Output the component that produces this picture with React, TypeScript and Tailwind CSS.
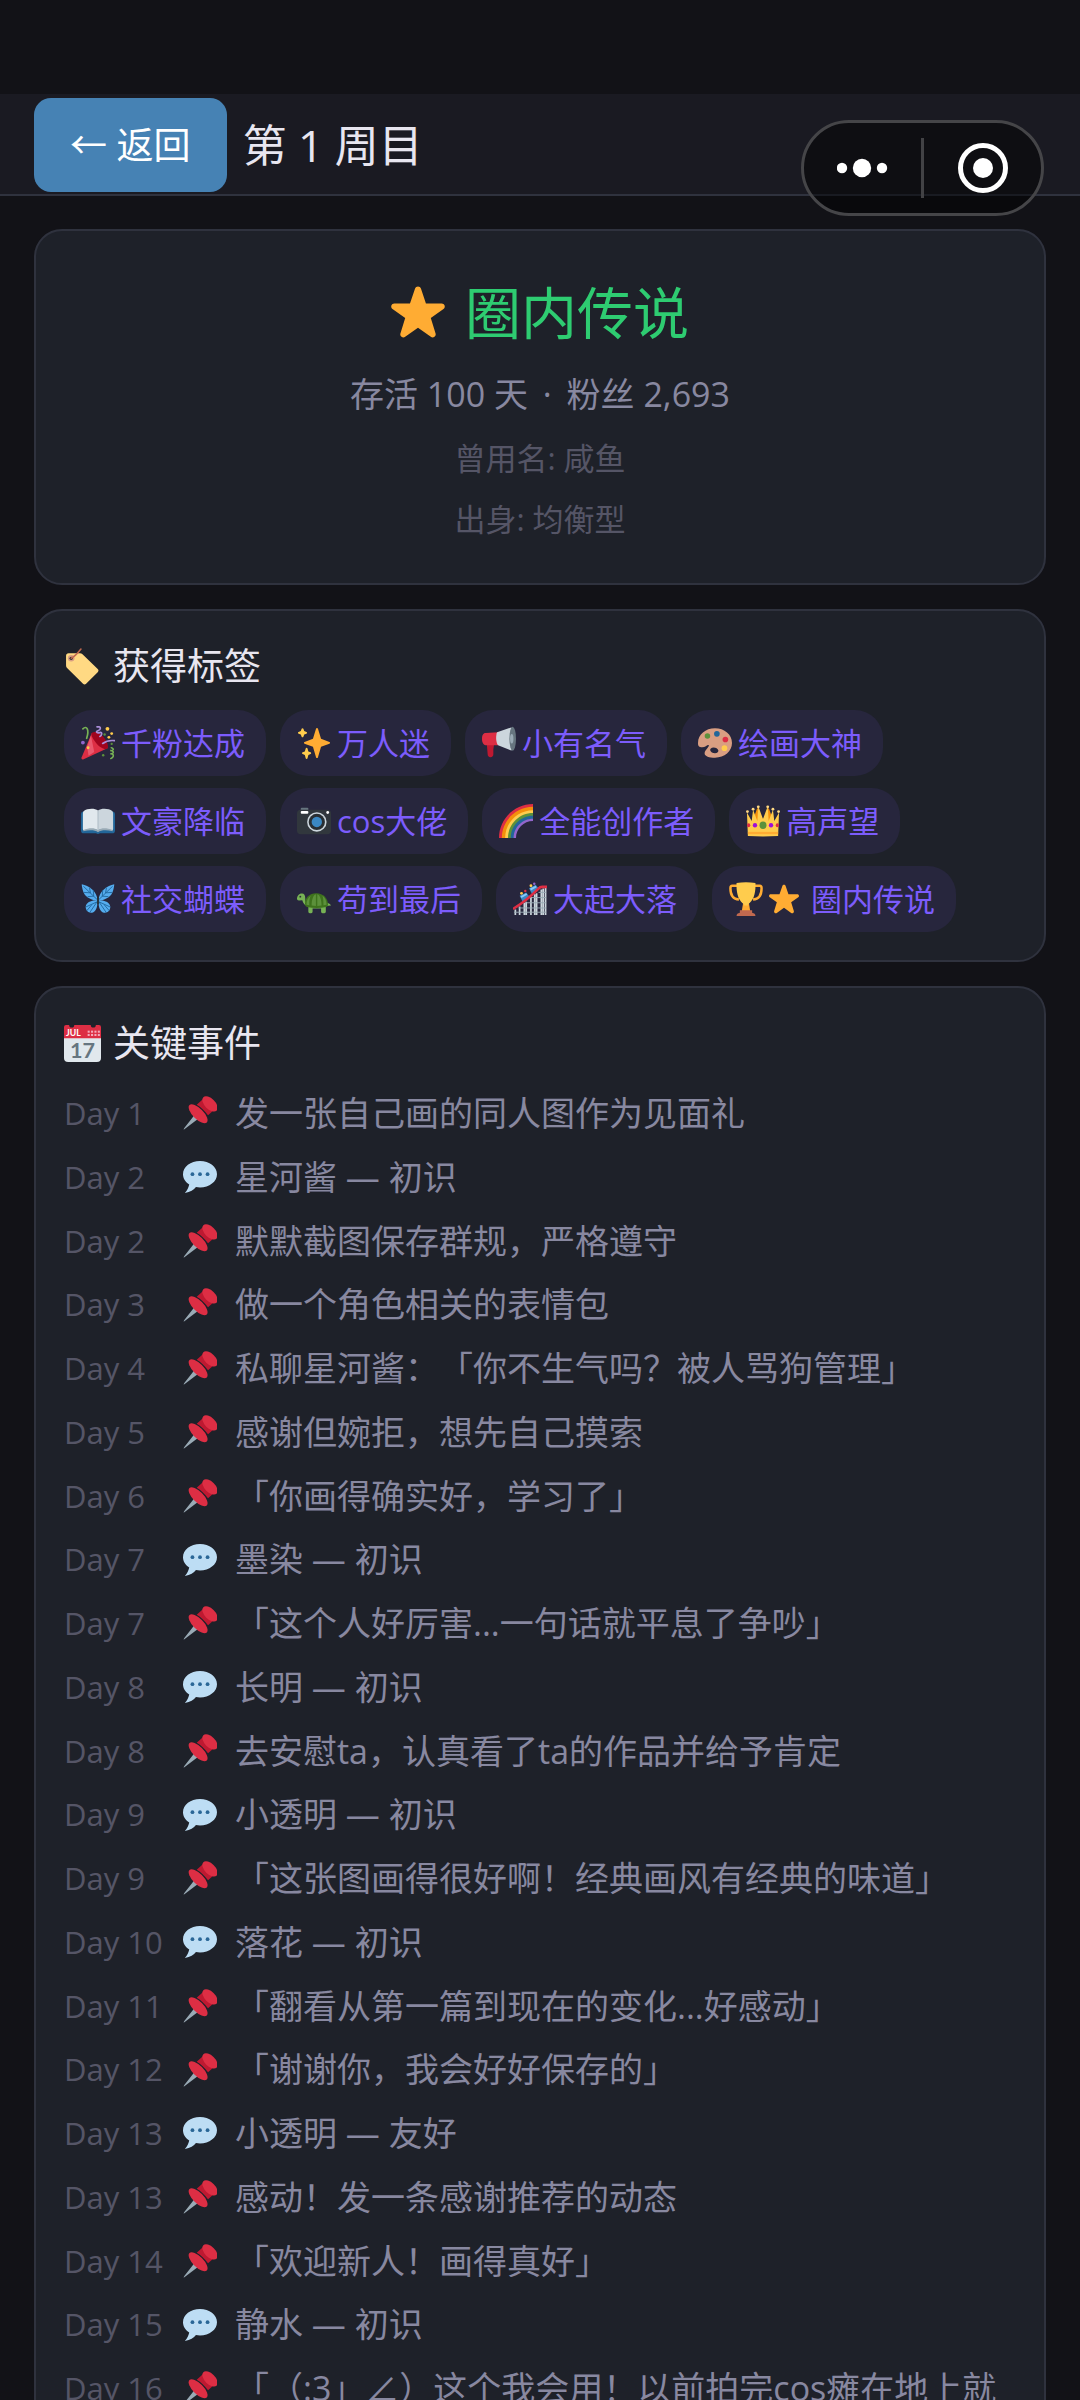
import React from "react";

interface IconProps {
  className?: string;
}

interface Tag {
  icons: React.FC<IconProps>[];
  text: string;
}

interface GameEvent {
  day: number;
  kind: "pin" | "chat";
  text: string;
}

const StarIcon: React.FC<IconProps> = ({ className }) => (
  <svg viewBox="1 2 34 33" className={className} aria-hidden="true">
    <path
      fill="#FFAC33"
      d="M27.287 34.627c-.404 0-.806-.124-1.152-.371L18 28.422l-8.135 5.834c-.343.247-.743.371-1.147.371-.409 0-.818-.124-1.165-.375-.684-.499-.971-1.379-.709-2.183l3.034-9.792-8.062-5.681c-.685-.495-.97-1.372-.711-2.176.262-.805 1.01-1.351 1.857-1.354l9.947-.016L16.14 3.632c.271-.8 1.02-1.338 1.86-1.338.845 0 1.594.538 1.859 1.338l3.176 9.418 9.994.016c.848.001 1.596.548 1.857 1.354.262.803-.023 1.681-.709 2.176l-8.063 5.681 3.035 9.792c.26.804-.027 1.684-.709 2.183-.348.251-.758.375-1.153.375z"
    />
  </svg>
);

const LabelIcon: React.FC<IconProps> = ({ className }) => (
  <svg viewBox="0 0 36 36" className={className} aria-hidden="true">
    <path
      fill="#FFD983"
      d="M2 7.500Q2 5 4.500 5H15.500Q17 5 18 6L32.800 20.500Q34.300 22 32.800 23.500L21.500 34.800Q20 36.200 18.500 34.800L3 19.500Q2 18.500 2 17Z"
    />
    <circle cx="7" cy="10" r="3.200" fill="#D99E82" />
    <circle cx="7" cy="10" r="1.600" fill="#292F33" />
    <path d="M7 10Q11 8 16.500 1" fill="none" stroke="#C1694F" strokeWidth="1.500" strokeLinecap="round" />
  </svg>
);

const CalendarIcon: React.FC<IconProps> = ({ className }) => (
  <svg viewBox="0 0 36 36" className={className} aria-hidden="true">
    <path fill="#E1E8ED" d="M0 11h36v21a4 4 0 0 1-4 4H4a4 4 0 0 1-4-4z" />
    <path
      fill="#DD2E44"
      d="M2 0h3a2.500 2.500 0 0 0 5 0h16a2.500 2.500 0 0 0 5 0h3a2 2 0 0 1 2 2v11H0V2a2 2 0 0 1 2-2z"
    />
    <g fill="#F4ABBA">
      <rect x="23" y="5.500" width="2" height="2" />
      <rect x="26.300" y="5.500" width="2" height="2" />
      <rect x="29.600" y="5.500" width="2" height="2" />
      <rect x="32.900" y="5.500" width="2" height="2" />
      <rect x="23" y="8.700" width="2" height="2" />
      <rect x="26.300" y="8.700" width="2" height="2" />
      <rect x="29.600" y="8.700" width="2" height="2" />
      <rect x="32.900" y="8.700" width="2" height="2" />
    </g>
    <text x="2" y="10.600" fontSize="8.500" fontWeight="700" fill="#fff" fontFamily="Lato, sans-serif">
      JUL
    </text>
    <text
      x="18"
      y="32"
      fontSize="21"
      fontWeight="700"
      textAnchor="middle"
      fill="#66757F"
      fontFamily="Lato, sans-serif"
    >
      17
    </text>
  </svg>
);

const PinIcon: React.FC<IconProps> = ({ className }) => (
  <svg viewBox="0 0 36 36" className={className} aria-hidden="true">
    <path fill="#99AAB5" d="M12 20.500l3.800 3.800L2.500 34.400Q1 35.600.700 35.300T1.600 33.500z" />
    <ellipse cx="16" cy="18.800" rx="13" ry="5.600" transform="rotate(45 16 18.800)" fill="#DD2E44" />
    <path fill="#BE1931" d="M21 3.500L32.500 15 26.500 20.500Q24 17 20.500 13.800 17.500 11 14.500 9.300z" />
    <ellipse cx="28.600" cy="8.400" rx="10" ry="5.600" transform="rotate(45 28.600 8.400)" fill="#DD2E44" />
  </svg>
);

const ChatIcon: React.FC<IconProps> = ({ className }) => (
  <svg viewBox="0 0 36 36" className={className} aria-hidden="true">
    <path
      fill="#BDDDF4"
      d="M18 1C8.059 1 0 7.268 0 15c0 4.368 2.574 8.268 6.604 10.835C6.080 28.144 4.859 31.569 2 35c5.758-.96 9.439-3.761 11.716-6.416C15.094 28.858 16.526 29 18 29c9.941 0 18-6.268 18-14S27.941 1 18 1z"
    />
    <circle cx="10" cy="15" r="2" fill="#2A6797" />
    <circle cx="18" cy="15" r="2" fill="#2A6797" />
    <circle cx="26" cy="15" r="2" fill="#2A6797" />
  </svg>
);

const PartyIcon: React.FC<IconProps> = ({ className }) => (
  <svg viewBox="0 0 36 36" className={className} aria-hidden="true">
    <path fill="#DD2E44" d="M11.500 7.500C15 6 29 18 28 23.500L2.800 35.300C1 36 0 35 .700 33.200z" />
    <path fill="#EA596E" d="M10.500 10L14 27.500 8 31.500 6.500 22z" />
    <path fill="#A0041E" d="M12 7c3-2 9 1 12.500 5.500s5.500 10 3 11.500-8-1.500-11.500-6S9.500 9 12 7z" />
    <circle cx="7.500" cy="23" r="1.500" fill="#FFCC4D" />
    <circle cx="2" cy="17.500" r="2" fill="#9266CC" />
    <path d="M2 3C6-1 9 4 6 13" fill="none" stroke="#77B255" strokeWidth="1.800" strokeLinecap="round" />
    <path
      d="M17 1c5-1 4 3 1 4s-1 3 2 2 2 3 0 4"
      fill="none"
      stroke="#AA8DD8"
      strokeWidth="1.800"
      strokeLinecap="round"
    />
    <path d="M23 18.500c4-3 8-3.500 12.500-3" fill="none" stroke="#AA8DD8" strokeWidth="1.800" strokeLinecap="round" />
    <path
      d="M32 23c4 1 2 3.500-1 3 4 0 4.500 3.500 0 3.500 4 0 4.500 3 .5 5"
      fill="none"
      stroke="#77B255"
      strokeWidth="1.600"
      strokeLinecap="round"
    />
    <circle cx="28" cy="3" r="2" fill="#FFCC4D" />
    <circle cx="32.500" cy="8" r="1.500" fill="#FFCC4D" />
    <circle cx="29.500" cy="12" r="1.500" fill="#FFCC4D" />
    <circle cx="25" cy="9" r="1.300" fill="#5C913B" />
    <circle cx="23.500" cy="31" r="1.300" fill="#5C913B" />
    <circle cx="32.500" cy="19" r="1.200" fill="#5C913B" />
  </svg>
);

const SparklesIcon: React.FC<IconProps> = ({ className }) => (
  <svg viewBox="0 0 36 36" className={className} aria-hidden="true">
    <path
      fill="#FFAC33"
      d="M34.347 16.893l-8.899-3.294-3.323-10.891c-.128-.42-.517-.708-.956-.708-.439 0-.828.288-.956.708l-3.322 10.891-8.9 3.294c-.393.146-.653.519-.653.938 0 .418.26.793.653.938l8.895 3.293 3.324 11.223c.126.424.516.715.959.715.442 0 .833-.291.959-.716l3.324-11.223 8.896-3.293c.391-.144.652-.518.652-.937 0-.418-.261-.792-.653-.938z"
    />
    <path
      fill="#FFCC4D"
      d="M14.347 27.894l-2.314-.856-.9-3.300c-.118-.436-.513-.738-.964-.738-.451 0-.846.302-.965.737l-.9 3.300-2.313.856c-.393.146-.653.520-.653.938 0 .418.260.793.653.938l2.301.853.907 3.622c.112.444.511.756.970.756.459 0 .858-.312.970-.757l.907-3.622 2.301-.853c.393-.144.653-.519.653-.937 0-.418-.260-.793-.653-.937zM10.009 6.231l-2.364-.875-.876-2.365c-.145-.393-.519-.653-.938-.653-.418 0-.792.260-.938.653l-.875 2.365-2.365.875c-.393.146-.653.520-.653.938 0 .418.260.793.653.938l2.365.875.875 2.365c.146.393.520.653.938.653.418 0 .792-.260.938-.653l.875-2.365 2.365-.875c.393-.146.653-.520.653-.938 0-.418-.260-.792-.653-.938z"
    />
  </svg>
);

const MegaphoneIcon: React.FC<IconProps> = ({ className }) => (
  <svg viewBox="0 0 36 36" className={className} aria-hidden="true">
    <path fill="#BE1931" d="M5 18h8l-1 7v5q0 3-3 3t-3-3z" />
    <path fill="#DD2E44" d="M4 7.500L17 6.500v14H5c-3 0-5-2.500-5-6.500s1-6.500 4-6.500z" />
    <path fill="#CCD6DD" d="M16 6.500L31 1.500c3 2 4 22 0 24.500L17 20.500c-2.500-3-2.500-11-1-14z" />
    <ellipse cx="32.500" cy="13.500" rx="3.500" ry="12.800" fill="#66757F" />
    <ellipse cx="31.500" cy="13.500" rx="1.800" ry="5" fill="#99AAB5" />
  </svg>
);

const PaletteIcon: React.FC<IconProps> = ({ className }) => (
  <svg viewBox="0 0 36 36" className={className} aria-hidden="true">
    <path
      fill="#D99E82"
      fillRule="evenodd"
      d="M18 2.500c10 0 18 6.500 18 15.500S28 33.500 18 33.500c-6 0-11-1.500-11-4.500 0-3.500 4.500-6 4.500-8.500-.8-1.700-3.500 2-7 2S0 21.500 0 18C0 9 8 2.500 18 2.500zm-1.500 20.300c-2.500 0-4 1.500-3.500 3.200s2.500 2.900 5 2.900 4-1.600 3.500-3.200-2.500-2.900-5-2.900z"
    />
    <circle cx="10" cy="10.500" r="2.900" fill="#5C913B" />
    <circle cx="20" cy="8.300" r="3" fill="#269" />
    <circle cx="29" cy="14.300" r="3" fill="#DD2E44" />
    <circle cx="28" cy="23.500" r="3" fill="#FFCC4D" />
  </svg>
);

const BookIcon: React.FC<IconProps> = ({ className }) => (
  <svg viewBox="0 0 36 36" className={className} aria-hidden="true">
    <path fill="#269" d="M3 8h30q3 0 3 3v17q0 3-3 3H20q-2 1.500-4 0H3q-3 0-3-3V11q0-3 3-3z" />
    <path fill="#E1E8ED" d="M18 7C14 4 6 5 3 7.500q-1 1-1 2.500v16.500q0 1.500 1.500 1.300C9 26 14 26 18 28z" />
    <path fill="#CCD6DD" d="M18 7c4-3 12-2 15 .5q1 1 1 2.500v16.500q0 1.500-1.500 1.300C27 26 22 26 18 28z" />
    <path fill="#99AAB5" d="M2.500 27.500C9 25 14 25 18 27.500c4-2.500 9-2.500 15.500 0v1.300c-6-1.300-12-1.500-15.500 1-3.500-2.500-9.500-2.300-15.500-1z" />
    <path stroke="#AAB8C2" strokeWidth="1" d="M18 7v21" />
  </svg>
);

const CameraIcon: React.FC<IconProps> = ({ className }) => (
  <svg viewBox="0 0 36 36" className={className} aria-hidden="true">
    <rect x="4" y="4" width="8" height="4" rx="1" fill="#66757F" />
    <rect y="6" width="36" height="26" rx="4" fill="#31373D" />
    <rect x="4" y="7.500" width="8" height="2.800" rx="1" fill="#fff" />
    <circle cx="21" cy="19" r="10.300" fill="#CCD6DD" />
    <circle cx="21" cy="19" r="8.600" fill="#292F33" />
    <circle cx="21" cy="19" r="5.500" fill="#3B88C3" />
    <circle cx="32.500" cy="9" r="1.500" fill="#fff" />
  </svg>
);

const RainbowIcon: React.FC<IconProps> = ({ className }) => (
  <svg viewBox="0 0 36 36" className={className} aria-hidden="true">
    <path fill="#DD2E44" d="M36 0C16.100 0 0 16.100 0 36h6C6 19.400 19.400 6 36 6z" />
    <path fill="#F4900C" d="M36 3C17.800 3 3 17.800 3 36h6C9 21 21 9 36 9z" />
    <path fill="#FFCC4D" d="M36 6.500C19.700 6.500 6.500 19.700 6.500 36H12C12 22.700 22.700 12 36 12z" />
    <path fill="#5C913B" d="M36 9.500C21.400 9.500 9.500 21.400 9.500 36H15c0-11.600 9.400-21 21-21z" />
    <path fill="#269" d="M36 12.500C23 12.500 12.500 23 12.500 36H17c0-10.500 8.500-19 19-19z" />
    <path fill="#9266CC" d="M36 15.500c-11.300 0-20.500 9.200-20.500 20.500H18c0-9.900 8.100-18 18-18z" />
  </svg>
);

const CrownIcon: React.FC<IconProps> = ({ className }) => (
  <svg viewBox="0 0 36 36" className={className} aria-hidden="true">
    <path fill="#F4900C" d="M7 18l5-14 6 13 6-13 5 14z" />
    <path
      fill="#FFCC4D"
      d="M2 34L1 9l5 9L7.500 6 12 18 13 2.500 18 16 23 2.500 24 18 28.500 6 30 18l5-9-1 25q-16 1-32 0z"
    />
    <path fill="#FFAC33" d="M2 29.500h32V32H2z" />
    <g fill="#FFD983">
      <circle cx="1.500" cy="8" r="1.500" />
      <circle cx="7.500" cy="5.500" r="1.500" />
      <circle cx="13" cy="3" r="1.500" />
      <circle cx="23" cy="3" r="1.500" />
      <circle cx="28.500" cy="5.500" r="1.500" />
      <circle cx="34.500" cy="8" r="1.500" />
    </g>
    <ellipse cx="18" cy="22.500" rx="3.700" ry="3.900" fill="#5C913B" />
    <ellipse cx="9.500" cy="22.500" rx="2.300" ry="2.500" fill="#9D0FD8" />
    <ellipse cx="26.500" cy="22.500" rx="2.300" ry="2.500" fill="#9D0FD8" />
    <ellipse cx="2.800" cy="22.500" rx="1.700" ry="2.100" fill="#DD2E44" />
    <ellipse cx="33.200" cy="22.500" rx="1.700" ry="2.100" fill="#DD2E44" />
  </svg>
);

const ButterflyIcon: React.FC<IconProps> = ({ className }) => (
  <svg viewBox="0 0 36 36" className={className} aria-hidden="true">
    <g fill="#55ACEE">
      <path d="M17.500 20C13 19.500 5 17 2.500 10.500 1.200 7 .8 4 .8 2.500 8 4 17.500 10 17.500 20z" />
      <path d="M18.500 20c4.500-.5 12.500-3 15-9.500 1.300-3.500 1.700-6.500 1.700-8C28 4 18.500 10 18.500 20z" />
      <path d="M17.500 20C13 18.500 5.500 21 5 26c-.3 4 3 7 6.500 6.500S17.500 28 17.500 20z" />
      <path d="M18.500 20c4.500-1.500 12 1 12.500 6 .3 4-3 7-6.500 6.500S18.500 28 18.500 20z" />
    </g>
    <path
      d="M17 18.500L2.500 4.500M10 11.500L9 6M13.500 15L13 8.500M10 11.500L3 11M13.500 15L7 15.500M19 18.500L33.500 4.500M26 11.500L27 6M22.500 15L23 8.500M26 11.500L33 11M22.500 15L29 15.500M17 21L9.500 32M17 21L5 26.500M11.500 24L6 30.500M19 21L26.500 32M19 21L31 26.500M24.500 24L30 30.500"
      stroke="#1C6399"
      strokeWidth=".9"
      fill="none"
    />
    <path d="M18 16v7" stroke="#292F33" strokeWidth="1.800" strokeLinecap="round" />
  </svg>
);

const TurtleIcon: React.FC<IconProps> = ({ className }) => (
  <svg viewBox="0 0 36 36" className={className} aria-hidden="true">
    <path
      fill="#77B255"
      d="M9 21C8.500 18 9.500 12.500 5.500 12.300 2 12.100 0 15 0 18q0 1.500 2 1.500l3.500-.2c1 1.500 1 5.200 6.500 6.200v6q0 1.500 1.500 1.500H15q1.500 0 1.500-1.500V28h9v3.500q0 1.500 1.500 1.500h2q1.500 0 1.500-1.500v-6l5.500-.6c-1-1.900-3-2.900-5-2.900z"
    />
    <path fill="#3E721D" d="M20.500 12C13 12 8.500 17 8.500 23q0 3 2 3.500Q21 28.500 31 26.500q1.800-.5 1.800-3C32.500 17.500 28 12 20.500 12z" />
    <path
      fill="#5C913B"
      d="M14.500 14.500C12 16 10 19.500 10 24l3 .5c0-4 0-7 1.500-10zM20 13c-3 1-4.500 6-4.500 12l4.500.3zM21.500 13c3 1 4.500 6 4.500 12l-4.500.3zM27 14.500c2.500 1.500 4.300 5 4.300 9.500l-3.300.5c0-4 0-7-1-10z"
    />
    <circle cx="3.500" cy="15.500" r="1" fill="#292F33" />
  </svg>
);

const CoasterIcon: React.FC<IconProps> = ({ className }) => (
  <svg viewBox="0 0 36 36" className={className} aria-hidden="true">
    <path
      d="M2.500 35v-6M7 35V26M12 35V22M14 35V21M19 35V16M23 35V13M25 35V12M30 35V8M32 35V7M34.500 35V6"
      stroke="#CCD6DD"
      strokeWidth="1.800"
    />
    <path d="M1 32h34M6 27.500h29M14 22h21M20 16.500h15M27 11h8" stroke="#99AAB5" strokeWidth="1" />
    <path fill="#3B88C3" d="M7 14.500l7-3.500 3.500 4.500-7 6zM17 6.500L24 3l3.500 4.500-7 6z" />
    <path fill="#88C9F9" d="M8 15l6-3 1 1.500-6 3.500zM18 7l6-3 1 1.500L19 9z" />
    <path d="M0 28.500C11 22 20 14 27 7q1.500-1.800 4-1.800H36" fill="none" stroke="#DD2E44" strokeWidth="2.800" />
    <circle cx="9" cy="12" r="1.500" fill="#FFCC4D" />
    <circle cx="13" cy="9.500" r="1.300" fill="#DD2E44" />
    <circle cx="19" cy="4" r="1.500" fill="#FFCC4D" />
    <circle cx="22.500" cy="1.800" r="1.300" fill="#9266CC" />
  </svg>
);

const TrophyIcon: React.FC<IconProps> = ({ className }) => (
  <svg viewBox="0 0 36 36" className={className} aria-hidden="true">
    <path
      d="M9 4H3.500Q1.500 4 1.500 6.500C1.500 12 3 18 10.500 18.500M27 4h5.500q2 0 2 2.500C34.500 12 33 18 25.500 18.500"
      fill="none"
      stroke="#FFAC33"
      strokeWidth="2.600"
    />
    <path fill="#FFAC33" d="M15 22h6l1.500 9h-9z" />
    <path fill="#FFCC4D" d="M8 1q10-1.500 20 0C28.500 12 26 20 20 23.500V25h-4v-1.500C10 20 7.500 12 8 1z" />
    <path fill="#C1694F" d="M11.500 30h13v2.500q3.500.5 3.500 3.500H8q0-3 3.500-3.500z" />
  </svg>
);

const tags: Tag[] = [
  { icons: [PartyIcon], text: "千粉达成" },
  { icons: [SparklesIcon], text: "万人迷" },
  { icons: [MegaphoneIcon], text: "小有名气" },
  { icons: [PaletteIcon], text: "绘画大神" },
  { icons: [BookIcon], text: "文豪降临" },
  { icons: [CameraIcon], text: "cos大佬" },
  { icons: [RainbowIcon], text: "全能创作者" },
  { icons: [CrownIcon], text: "高声望" },
  { icons: [ButterflyIcon], text: "社交蝴蝶" },
  { icons: [TurtleIcon], text: "苟到最后" },
  { icons: [CoasterIcon], text: "大起大落" },
  { icons: [TrophyIcon, StarIcon], text: "圈内传说" },
];

const events: GameEvent[] = [
  { day: 1, kind: "pin", text: "发一张自己画的同人图作为见面礼" },
  { day: 2, kind: "chat", text: "星河酱 — 初识" },
  { day: 2, kind: "pin", text: "默默截图保存群规，严格遵守" },
  { day: 3, kind: "pin", text: "做一个角色相关的表情包" },
  { day: 4, kind: "pin", text: "私聊星河酱：「你不生气吗？被人骂狗管理」" },
  { day: 5, kind: "pin", text: "感谢但婉拒，想先自己摸索" },
  { day: 6, kind: "pin", text: "「你画得确实好，学习了」" },
  { day: 7, kind: "chat", text: "墨染 — 初识" },
  { day: 7, kind: "pin", text: "「这个人好厉害...一句话就平息了争吵」" },
  { day: 8, kind: "chat", text: "长明 — 初识" },
  { day: 8, kind: "pin", text: "去安慰ta，认真看了ta的作品并给予肯定" },
  { day: 9, kind: "chat", text: "小透明 — 初识" },
  { day: 9, kind: "pin", text: "「这张图画得很好啊！经典画风有经典的味道」" },
  { day: 10, kind: "chat", text: "落花 — 初识" },
  { day: 11, kind: "pin", text: "「翻看从第一篇到现在的变化...好感动」" },
  { day: 12, kind: "pin", text: "「谢谢你，我会好好保存的」" },
  { day: 13, kind: "chat", text: "小透明 — 友好" },
  { day: 13, kind: "pin", text: "感动！发一条感谢推荐的动态" },
  { day: 14, kind: "pin", text: "「欢迎新人！画得真好」" },
  { day: 15, kind: "chat", text: "静水 — 初识" },
  { day: 16, kind: "pin", text: "「（:3」∠）这个我会用！以前拍完cos瘫在地上就" },
];

const App: React.FC = () => {
  return (
    <div
      lang="zh-CN"
      className="relative h-screen overflow-hidden bg-[#121217] pt-[94px] font-['Open_Sans','Noto_Sans_CJK_SC',sans-serif] text-[#e8e6f0] [text-spacing-trim:space-all]"
    >
      <header className="flex items-center gap-4 border-b-2 border-[#2f323e] bg-[#1a1a22] px-[34px] pt-1 pb-0.5">
        <button
          type="button"
          className="rounded-[17px] bg-[#4682b4] px-9 py-5 text-[37px] leading-[54px] text-white"
        >
          ← 返回
        </button>
        <h1 className="text-[44px] leading-[54px]">第 1 周目</h1>
      </header>

      {/* mini program capsule */}
      <div className="absolute top-[120px] right-9 flex h-24 items-center rounded-full border-3 border-[#454548] bg-black/45">
        <button type="button" aria-label="更多" className="flex w-[117px] justify-center">
          <svg viewBox="0 0 52 20" className="h-5 w-[52px]" fill="#fff">
            <circle cx="5" cy="10" r="5.200" />
            <circle cx="25" cy="10" r="9.200" />
            <circle cx="45" cy="10" r="5.200" />
          </svg>
        </button>
        <span className="h-15 w-[3px] bg-[#424245]" />
        <button type="button" aria-label="关闭" className="flex w-[117px] justify-center">
          <svg viewBox="0 0 50 50" className="size-[50px]">
            <circle cx="25" cy="25" r="22.500" fill="none" stroke="#fff" strokeWidth="5" />
            <circle cx="25" cy="25" r="10" fill="#fff" />
          </svg>
        </button>
      </div>

      <main className="flex flex-col gap-6 px-[34px] pt-[33px]">
        <section className="rounded-[28px] border-2 border-[#2f323e] bg-[#1e2129] px-7 pt-[41px] pb-[39px] text-center">
          <h2 className="flex items-center justify-center gap-5 text-[56px] leading-[80px] text-[#2ecc71]">
            <StarIcon className="h-[52px] w-[54px]" />
            圈内传说
          </h2>
          <p className="mt-3.5 text-[34px] leading-[56px] text-[#8888a0]">
            存活 100 天 <span className="mx-1.5">·</span> 粉丝 2,693
          </p>
          <p className="mt-[11px] text-[31px] leading-[50px] text-[#555566]">曾用名: 咸鱼</p>
          <p className="mt-[11px] text-[31px] leading-[50px] text-[#555566]">出身: 均衡型</p>
        </section>

        <section className="rounded-[28px] border-2 border-[#2f323e] bg-[#1e2129] p-7">
          <h3 className="mb-[17px] flex items-center gap-3 text-[37px] leading-[54px]">
            <LabelIcon className="size-[37px]" />
            获得标签
          </h3>
          <ul className="flex flex-wrap gap-x-3.5 gap-y-3">
            {tags.map((tag) => (
              <li
                key={tag.text}
                className="flex items-center gap-1.5 rounded-[28px] bg-[#27263d] py-2 pr-[21px] pl-[17px] text-[31px] leading-[50px] text-[#7c5cfc]"
              >
                {tag.icons.map((Icon, i) => (
                  <Icon key={i} className={i === 0 ? "size-[34px]" : "mr-1.5 size-[30px]"} />
                ))}
                {tag.text}
              </li>
            ))}
          </ul>
        </section>

        <section className="rounded-[28px] border-2 border-[#2f323e] bg-[#1e2129] p-7">
          <h3 className="mb-5 flex items-center gap-3 text-[37px] leading-[54px]">
            <CalendarIcon className="size-[37px]" />
            关键事件
          </h3>
          <ul className="flex flex-col gap-[17px] text-[34px] leading-snug">
            {events.map((event, index) => (
              <li key={index} className="flex items-center gap-[18px]">
                <span className="w-[101px] shrink-0 text-[31px] whitespace-nowrap text-[#555566]">
                  Day {event.day}
                </span>
                {event.kind === "pin" ? (
                  <PinIcon className="size-[34px] shrink-0" />
                ) : (
                  <ChatIcon className="size-[34px] shrink-0" />
                )}
                <span className="text-[#8888a0]">{event.text}</span>
              </li>
            ))}
          </ul>
        </section>
      </main>
    </div>
  );
};

export default App;
